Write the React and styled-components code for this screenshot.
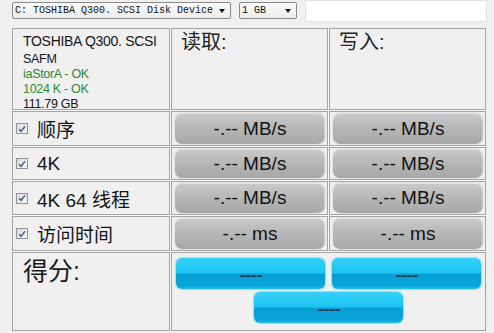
import React from "react";
import styled, { createGlobalStyle } from "styled-components";

const GlobalStyle = createGlobalStyle`
  html, body {
    margin: 0;
    padding: 0;
    background: #f0f0f0;
  }
  body {
    font-family: "Liberation Sans", Arial, sans-serif;
    color: #111;
  }
`;

const CJK = `"Liberation Sans", "Noto Sans CJK SC", sans-serif`;

export default function App() {
  const rows = [
    { label: "顺序", read: "-.-- MB/s", write: "-.-- MB/s" },
    { label: "4K", read: "-.-- MB/s", write: "-.-- MB/s" },
    { label: "4K 64 线程", read: "-.-- MB/s", write: "-.-- MB/s" },
    { label: "访问时间", read: "-.-- ms", write: "-.-- ms" },
  ];

  return (
    <Page>
      <GlobalStyle />
      <Toolbar>
        <Select $width={219}>
          <span>C: TOSHIBA Q300. SCSI Disk Device</span>
          <Arrow />
        </Select>
        <Select $width={58}>
          <span>1 GB</span>
          <Arrow />
        </Select>
        <TextBox />
      </Toolbar>

      <Board>
        <InfoCell>
          <InfoTitle>TOSHIBA Q300. SCSI</InfoTitle>
          <InfoLine>SAFM</InfoLine>
          <InfoLine $ok>iaStorA - OK</InfoLine>
          <InfoLine $ok>1024 K - OK</InfoLine>
          <InfoLine>111.79 GB</InfoLine>
        </InfoCell>
        <HeadCell>读取:</HeadCell>
        <HeadCell>写入:</HeadCell>

        {rows.map((r) => (
          <React.Fragment key={r.label}>
            <LabelCell>
              <Check>
                <svg width="8" height="8" viewBox="0 0 8 8">
                  <path
                    d="M1 4.2 L3.1 6.3 L7 1.4"
                    fill="none"
                    stroke="#4c5b8e"
                    strokeWidth="1.5"
                  />
                </svg>
              </Check>
              <Label>{r.label}</Label>
            </LabelCell>
            <ValueCell>
              <GrayButton>{r.read}</GrayButton>
            </ValueCell>
            <ValueCell>
              <GrayButton>{r.write}</GrayButton>
            </ValueCell>
          </React.Fragment>
        ))}

        <ScoreCell>得分:</ScoreCell>
        <ScoreRack>
          <BlueButton>----</BlueButton>
          <BlueButton>----</BlueButton>
          <BlueButton>----</BlueButton>
        </ScoreRack>
      </Board>
    </Page>
  );
}

const Page = styled.div`
  width: 494px;
  height: 333px;
  overflow: hidden;
  background: #f0f0f0;
`;

const Toolbar = styled.div`
  display: flex;
  align-items: flex-start;
  gap: 8px;
  padding-left: 12px;
  height: 22px;
`;

const Select = styled.div`
  box-sizing: border-box;
  width: ${(p) => p.$width}px;
  height: 17px;
  margin-top: 2px;
  border: 1px solid #8a8a8a;
  border-radius: 2px;
  background: linear-gradient(#fbfbfb, #ececec);
  display: flex;
  align-items: center;
  justify-content: space-between;
  padding: 0 5px 0 2px;
  font-family: "Liberation Mono", "Courier New", monospace;
  font-size: 10px;
  color: #111;
  white-space: nowrap;
`;

const Arrow = styled.span`
  width: 0;
  height: 0;
  border-left: 3.5px solid transparent;
  border-right: 3.5px solid transparent;
  border-top: 4px solid #111;
`;

const TextBox = styled.div`
  box-sizing: border-box;
  width: 182px;
  height: 22px;
  background: #fff;
  border: 1px solid #e2e2e2;
`;

const Board = styled.div`
  margin: 6px 0 0 12px;
  width: 474px;
  display: grid;
  grid-template-columns: 158px 157px 157px;
  grid-template-rows: 82px 35px 33px 34px 35px 79px;
  gap: 1px;
  background: #fbfbfb;
`;

const Cell = styled.div`
  box-sizing: border-box;
  border: 1px solid #a3a3a3;
  background: #f0f0f0;
`;

const InfoCell = styled(Cell)`
  padding: 2px 10px 0;
`;

const InfoTitle = styled.div`
  font-size: 14px;
  line-height: 21px;
  letter-spacing: -0.3px;
  color: #161616;
`;

const InfoLine = styled.div`
  font-size: 12.5px;
  line-height: 15px;
  letter-spacing: -0.3px;
  color: ${(p) => (p.$ok ? "#2f8a2f" : "#161616")};
`;

const HeadCell = styled(Cell)`
  padding: 1px 9px;
  font-family: ${CJK};
  font-size: 20px;
  line-height: 24px;
  color: #222;
`;

const LabelCell = styled(Cell)`
  display: flex;
  align-items: center;
  gap: 9px;
  padding-left: 3px;
`;

const Check = styled.span`
  box-sizing: border-box;
  width: 12px;
  height: 11px;
  border: 1px solid #8f9296;
  background: linear-gradient(135deg, #d9dbde, #f7f7f7);
  display: flex;
  align-items: center;
  justify-content: center;
`;

const Label = styled.span`
  font-family: ${CJK};
  font-size: 19px;
  color: #151515;
`;

const ValueCell = styled(Cell)`
  display: flex;
  padding: 1px 2px 1px 3px;
`;

const GrayButton = styled.div`
  flex: 1;
  border-radius: 7px;
  background: linear-gradient(#cbcbcb 0%, #b8b8b8 45%, #a7a7a7 100%);
  box-shadow: inset 0 1px 0 rgba(255, 255, 255, 0.45),
    inset -1px 0 0 rgba(255, 255, 255, 0.35), 0 0 0 1px #e4e4e4;
  display: flex;
  align-items: center;
  justify-content: center;
  font-size: 19px;
  color: #111;
`;

const ScoreCell = styled(Cell)`
  padding: 3px 10px;
  font-family: ${CJK};
  font-size: 25px;
  line-height: 30px;
  color: #1a1a1a;
`;

const ScoreRack = styled(Cell)`
  grid-column: span 2;
  display: flex;
  flex-wrap: wrap;
  justify-content: center;
  align-content: flex-start;
  gap: 3px 7px;
  padding-top: 5px;
`;

const BlueButton = styled.div`
  width: 149px;
  height: 31px;
  border-radius: 6px;
  background: linear-gradient(
    #35d0f7 0%,
    #1cc3f2 48%,
    #089fd3 52%,
    #0aa5d9 92%,
    #2cc0ea 100%
  );
  box-shadow: 0 0 1px 1px #8fdff6;
  display: flex;
  align-items: center;
  justify-content: center;
  padding-top: 4px;
  box-sizing: border-box;
  font-size: 20px;
  color: #1b3848;
  letter-spacing: -1px;
`;
